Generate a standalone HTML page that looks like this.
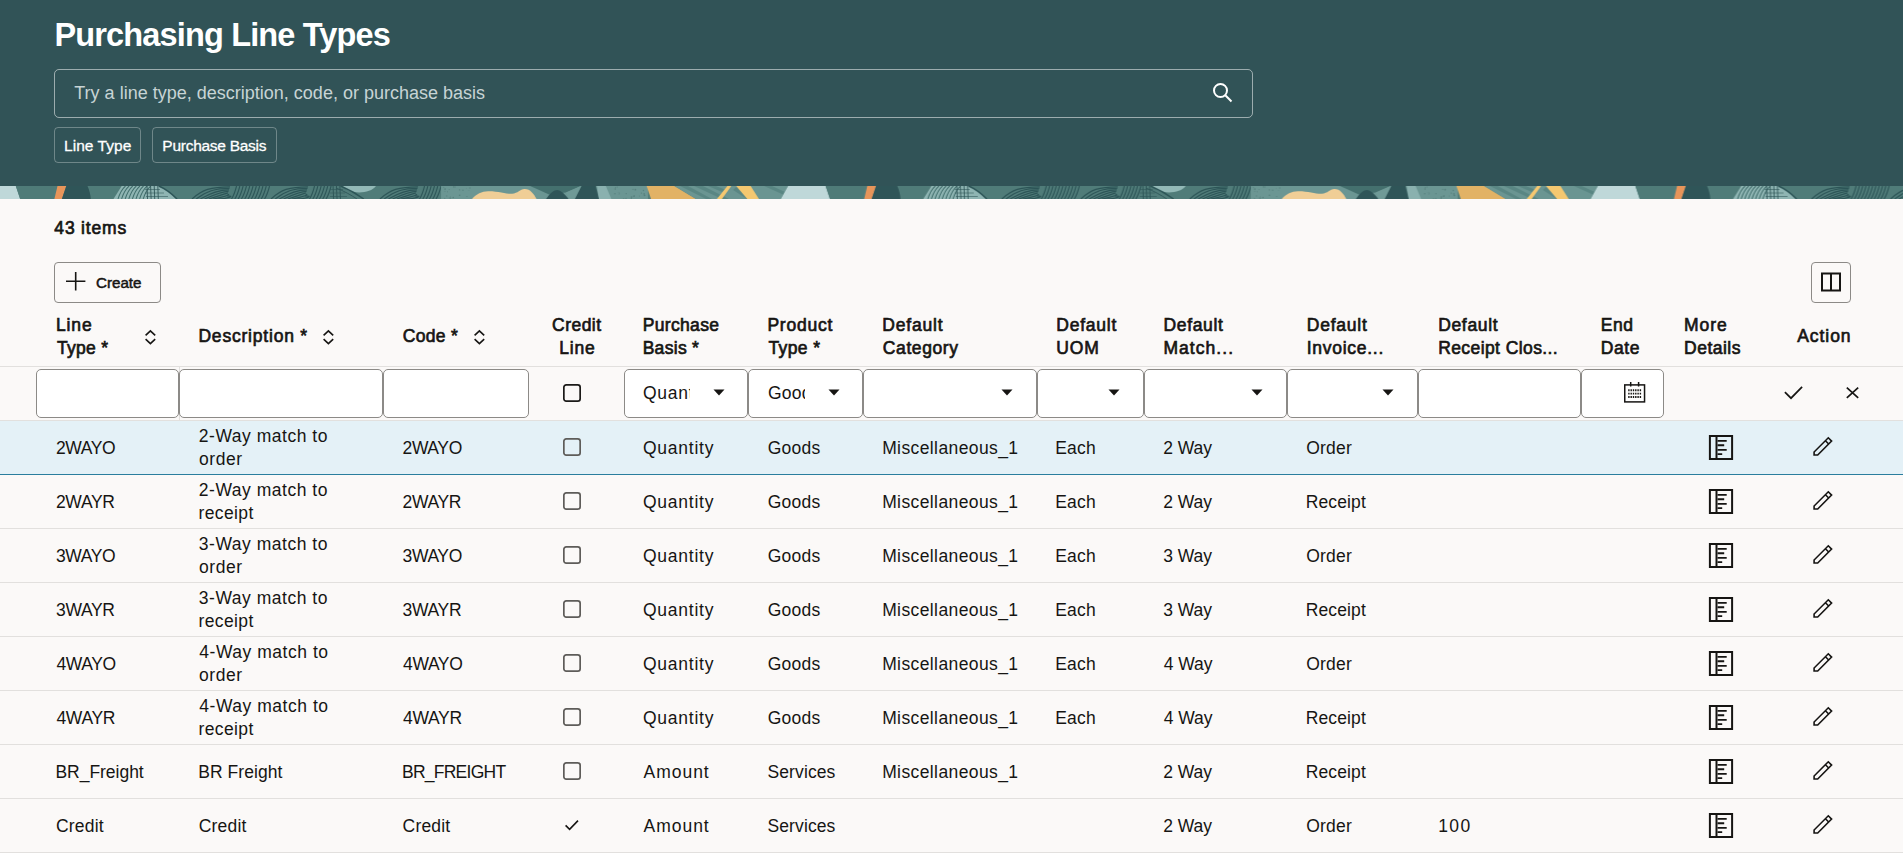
<!DOCTYPE html>
<html lang="en">
<head>
<meta charset="utf-8">
<title>Purchasing Line Types</title>
<style>
*{box-sizing:border-box;margin:0;padding:0}
html,body{width:1903px;height:853px;overflow:hidden;background:#fbf9f8}
body{font-family:"Liberation Sans",sans-serif;color:#161513;font-size:17px;position:relative}
#hdr{position:absolute;left:0;top:0;width:1903px;height:186px;background:#315357}
#search{position:absolute;left:54px;top:69px;width:1199px;height:49px;border:1px solid rgba(255,255,255,.52);border-radius:5px}
.chip{position:absolute;top:127px;height:36px;border:1px solid rgba(255,255,255,.3);border-radius:4px}
#strip{position:absolute;left:0;top:186px;width:1903px;height:13px;display:block}
.btn{position:absolute;border:1px solid #8c8a87;border-radius:4px;background:#fbf9f8}
#create{left:54px;top:262px;width:107px;height:41px}
#colbtn{left:1811px;top:262px;width:40px;height:41px}
.t{position:absolute;white-space:nowrap;line-height:24px;height:24px}
.ttl{font-size:32.5px;font-weight:bold;color:#fff;line-height:40px;height:40px}
.ph{font-size:18px;color:#c7d4d5}
.chp{font-size:15.5px;color:#fff;-webkit-text-stroke:.28px #fff}
.cnt{font-size:17.5px;-webkit-text-stroke:.68px #161513}
.crt{font-size:15.2px;-webkit-text-stroke:.5px #161513}
.th{font-size:17.5px;-webkit-text-stroke:.66px #161513}
.td{font-size:17.5px}
.clip{overflow:hidden}
.hl{position:absolute;left:0;width:1903px;height:1px;background:#e2e0de}
.inp{position:absolute;top:369px;height:49px;background:#fff;border:1px solid #8c8a87;border-radius:5px}
.row{position:absolute;left:0;width:1903px;height:54px;border-bottom:1px solid #e2e0de}
.row.sel{background:#e4f1f7;border-bottom:1px solid #2a7e9e}
.cb{position:absolute;left:563px;width:18px;height:18px;border:2px solid #646260;border-radius:3px;background:transparent}
svg{position:absolute;overflow:visible}
</style>
</head>
<body>
<div id="hdr">
  <div id="search">
    <svg style="left:1155px;top:10.3px" width="24" height="24" viewBox="0 0 24 24" fill="none" stroke="#fff" stroke-width="2"><circle cx="10.5" cy="10.5" r="6.5"/><path d="M15.3 15.3 L21.5 21.5"/></svg>
  </div>
  <div class="chip" style="left:54px;width:87px"></div>
  <div class="chip" style="left:152px;width:125px"></div>
</div>
<svg id="strip" width="1903" height="13" viewBox="0 0 1903 13">
<defs><pattern id="pt" x="54" y="0" width="809.8" height="13" patternUnits="userSpaceOnUse"><g transform="translate(-54,0)">
<rect x="54" y="0" width="809.8" height="13" fill="#507c79"/>
<path d="M57.5 0 L66.3 0 L61.9 13 L54.4 13 Z" fill="#e8955a"/>
<path d="M66.3 0 L87.5 0 C89.5 4 90.5 9 90.8 13 L61.9 13 Z" fill="#2f5558"/>
<path d="M121.7 0 L158.7 0 C166 3 172 8 177 13 L113.5 13 Z" fill="#8fb5b3"/>
<path d="M118.0 13 C119.5 8 122.0 3 125.5 0" stroke="#3f6d6b" stroke-width="1" fill="none"/>
<path d="M121.6 13 C123.1 8 125.6 3 129.1 0" stroke="#3f6d6b" stroke-width="1" fill="none"/>
<path d="M125.2 13 C126.7 8 129.2 3 132.7 0" stroke="#3f6d6b" stroke-width="1" fill="none"/>
<path d="M128.8 13 C130.3 8 132.8 3 136.3 0" stroke="#3f6d6b" stroke-width="1" fill="none"/>
<path d="M132.4 13 C133.9 8 136.4 3 139.9 0" stroke="#3f6d6b" stroke-width="1" fill="none"/>
<path d="M136.0 13 C137.5 8 140.0 3 143.5 0" stroke="#3f6d6b" stroke-width="1" fill="none"/>
<path d="M139.6 13 C141.1 8 143.6 3 147.1 0" stroke="#3f6d6b" stroke-width="1" fill="none"/>
<path d="M143.2 13 C144.7 8 147.2 3 150.7 0" stroke="#3f6d6b" stroke-width="1" fill="none"/>
<path d="M147.0 0 L147.5 13" stroke="#2c5557" stroke-width="0.9" fill="none"/>
<path d="M150.6 0 L151.1 13" stroke="#2c5557" stroke-width="0.9" fill="none"/>
<path d="M154.2 0 L154.7 13" stroke="#2c5557" stroke-width="0.9" fill="none"/>
<path d="M157.8 0 L158.3 13" stroke="#2c5557" stroke-width="0.9" fill="none"/>
<path d="M145 3.5 L160 3.5 M145 7 L164 7 M146 10.5 L168 10.5" stroke="#2c5557" stroke-width="0.7" fill="none" opacity=".8"/>
<path d="M158.7 0 C166 3 172 8 177 13" stroke="#2c5557" stroke-width="1.6" fill="none"/>
<path d="M192.0 13 C202.2 3.8 210.7 0.8 230.0 0.8" stroke="#2c5557" stroke-width="1.25" fill="none"/>
<path d="M196.2 13 C206.4 5.3 214.9 2.3 229.5 2.3" stroke="#2c5557" stroke-width="1.25" fill="none"/>
<path d="M200.4 13 C210.6 6.8 219.1 3.8 229.0 3.8" stroke="#2c5557" stroke-width="1.25" fill="none"/>
<path d="M204.6 13 C214.8 8.3 223.3 5.3 228.5 5.3" stroke="#2c5557" stroke-width="1.25" fill="none"/>
<path d="M208.8 13 C219.0 9.8 227.5 6.8 228.0 6.8" stroke="#2c5557" stroke-width="1.25" fill="none"/>
<path d="M213.0 13 C223.2 11.3 231.7 8.3 227.5 8.3" stroke="#2c5557" stroke-width="1.25" fill="none"/>
<path d="M217.2 13 C227.4 12.8 235.9 9.8 227.0 9.8" stroke="#2c5557" stroke-width="1.25" fill="none"/>
<path d="M236.5 0 C235.5 4 234.0 9 231.5 13" stroke="#2c5557" stroke-width="1.15" fill="none"/>
<path d="M239.8 0 C238.8 4 237.3 9 234.8 13" stroke="#2c5557" stroke-width="1.15" fill="none"/>
<path d="M243.1 0 C242.1 4 240.6 9 238.1 13" stroke="#2c5557" stroke-width="1.15" fill="none"/>
<path d="M246.4 0 C245.4 4 243.9 9 241.4 13" stroke="#2c5557" stroke-width="1.15" fill="none"/>
<path d="M249.7 0 C248.7 4 247.2 9 244.7 13" stroke="#2c5557" stroke-width="1.15" fill="none"/>
<path d="M253.0 0 C252.0 4 250.5 9 248.0 13" stroke="#2c5557" stroke-width="1.15" fill="none"/>
<path d="M256.3 0 C255.3 4 253.8 9 251.3 13" stroke="#2c5557" stroke-width="1.15" fill="none"/>
<path d="M259.6 0 C258.6 4 257.1 9 254.6 13" stroke="#2c5557" stroke-width="1.15" fill="none"/>
<path d="M262.9 0 C261.9 4 260.4 9 257.9 13" stroke="#2c5557" stroke-width="1.15" fill="none"/>
<path d="M266.2 0 C265.2 4 263.7 9 261.2 13" stroke="#2c5557" stroke-width="1.15" fill="none"/>
<path d="M269.5 0 C268.5 4 267.0 9 264.5 13" stroke="#2c5557" stroke-width="1.15" fill="none"/>
<path d="M271.0 13 C280.9 3.8 289.1 0.8 308.0 0.8" stroke="#2c5557" stroke-width="1.25" fill="none"/>
<path d="M275.2 13 C285.1 5.3 293.3 2.3 307.5 2.3" stroke="#2c5557" stroke-width="1.25" fill="none"/>
<path d="M279.4 13 C289.3 6.8 297.5 3.8 307.0 3.8" stroke="#2c5557" stroke-width="1.25" fill="none"/>
<path d="M283.6 13 C293.5 8.3 301.8 5.3 306.5 5.3" stroke="#2c5557" stroke-width="1.25" fill="none"/>
<path d="M287.8 13 C297.7 9.8 305.9 6.8 306.0 6.8" stroke="#2c5557" stroke-width="1.25" fill="none"/>
<path d="M292.0 13 C301.9 11.3 310.1 8.3 305.5 8.3" stroke="#2c5557" stroke-width="1.25" fill="none"/>
<path d="M296.2 13 C306.1 12.8 314.3 9.8 305.0 9.8" stroke="#2c5557" stroke-width="1.25" fill="none"/>
<path d="M314.5 0 C313.5 4 312.0 9 309.5 13" stroke="#2c5557" stroke-width="1.15" fill="none"/>
<path d="M317.8 0 C316.8 4 315.3 9 312.8 13" stroke="#2c5557" stroke-width="1.15" fill="none"/>
<path d="M321.1 0 C320.1 4 318.6 9 316.1 13" stroke="#2c5557" stroke-width="1.15" fill="none"/>
<path d="M324.4 0 C323.4 4 321.9 9 319.4 13" stroke="#2c5557" stroke-width="1.15" fill="none"/>
<path d="M327.7 0 C326.7 4 325.2 9 322.7 13" stroke="#2c5557" stroke-width="1.15" fill="none"/>
<path d="M331.0 0 C330.0 4 328.5 9 326.0 13" stroke="#2c5557" stroke-width="1.15" fill="none"/>
<path d="M333.0 0 L333.6 13" stroke="#2c5557" stroke-width="1" fill="none"/>
<path d="M336.4 0 L337.0 13" stroke="#2c5557" stroke-width="1" fill="none"/>
<path d="M339.8 0 L340.4 13" stroke="#2c5557" stroke-width="1" fill="none"/>
<path d="M330 3.5 L343 3.5 M330 7 L345 7 M330 10.5 L347 10.5" stroke="#2c5557" stroke-width="0.7" fill="none" opacity=".8"/>
<path d="M380.0 13 C390.2 3.8 398.7 0.8 418.0 0.8" stroke="#2c5557" stroke-width="1.25" fill="none"/>
<path d="M384.2 13 C394.4 5.3 402.9 2.3 417.5 2.3" stroke="#2c5557" stroke-width="1.25" fill="none"/>
<path d="M388.4 13 C398.6 6.8 407.1 3.8 417.0 3.8" stroke="#2c5557" stroke-width="1.25" fill="none"/>
<path d="M392.6 13 C402.8 8.3 411.3 5.3 416.5 5.3" stroke="#2c5557" stroke-width="1.25" fill="none"/>
<path d="M396.8 13 C407.0 9.8 415.5 6.8 416.0 6.8" stroke="#2c5557" stroke-width="1.25" fill="none"/>
<path d="M401.0 13 C411.2 11.3 419.7 8.3 415.5 8.3" stroke="#2c5557" stroke-width="1.25" fill="none"/>
<path d="M405.2 13 C415.4 12.8 423.9 9.8 415.0 9.8" stroke="#2c5557" stroke-width="1.25" fill="none"/>
<path d="M424.5 0 C423.5 4 422.0 9 419.5 13" stroke="#2c5557" stroke-width="1.15" fill="none"/>
<path d="M427.8 0 C426.8 4 425.3 9 422.8 13" stroke="#2c5557" stroke-width="1.15" fill="none"/>
<path d="M431.1 0 C430.1 4 428.6 9 426.1 13" stroke="#2c5557" stroke-width="1.15" fill="none"/>
<path d="M434.4 0 C433.4 4 431.9 9 429.4 13" stroke="#2c5557" stroke-width="1.15" fill="none"/>
<path d="M437.7 0 C436.7 4 435.2 9 432.7 13" stroke="#2c5557" stroke-width="1.15" fill="none"/>
<path d="M441.0 0 C440.0 4 438.5 9 436.0 13" stroke="#2c5557" stroke-width="1.15" fill="none"/>
<path d="M342.8 0 C348 8.5 370 8.5 375.9 0 Z" fill="#93b9b7"/>
<path d="M340.6 0 C349 3.5 357 8 363.8 13" stroke="#2c5557" stroke-width="1.5" fill="none"/>
<path d="M336 2 C344 5 351 9 357 13" stroke="#2c5557" stroke-width="0.9" fill="none"/>
<rect x="441" y="0" width="207" height="13" fill="#6b9693"/>
<path d="M530 0 L581 0 L566 6.5 L549 8.6 L538 3.4 Z" fill="#44706e"/>
<path d="M472 13 C476 8 482 5.4 488 5.2 C498 5 506 8 512 7.7 C518 7.4 520 3.2 524.5 3 C530 2.8 534 8 536.5 13 Z" fill="#f0ce96"/>
<path d="M546 13 C550 7 554 4 557 4 C561 4 565 8.5 568.5 13 Z" fill="#2f5558"/>
<path d="M566 6.5 L581 0 L576 13 L569 13 Z" fill="#6f9a97"/>
<path d="M581.5 0 L595.8 0 L599 13 L574.9 13 Z" fill="#2f5558"/>
<path d="M597 0 L605.8 0 L611.3 13 L599 13 Z" fill="#8ab1af"/>
<circle cx="444.9" cy="5.3" r="0.5" fill="#547f7c"/>
<circle cx="453.2" cy="11.5" r="0.8" fill="#547f7c"/>
<circle cx="619.5" cy="6.9" r="0.5" fill="#547f7c"/>
<circle cx="445.0" cy="3.1" r="0.9" fill="#547f7c"/>
<circle cx="639.4" cy="10.1" r="0.5" fill="#547f7c"/>
<circle cx="459.6" cy="9.3" r="0.8" fill="#547f7c"/>
<circle cx="614.9" cy="7.8" r="0.7" fill="#547f7c"/>
<circle cx="618.0" cy="6.2" r="0.4" fill="#547f7c"/>
<circle cx="641.4" cy="7.1" r="0.6" fill="#547f7c"/>
<circle cx="631.5" cy="11.1" r="0.8" fill="#547f7c"/>
<circle cx="626.1" cy="7.7" r="0.6" fill="#547f7c"/>
<circle cx="450.5" cy="10.3" r="0.4" fill="#547f7c"/>
<circle cx="459.5" cy="3.9" r="0.7" fill="#547f7c"/>
<circle cx="623.7" cy="12.5" r="0.5" fill="#547f7c"/>
<circle cx="618.9" cy="8.1" r="0.5" fill="#547f7c"/>
<circle cx="462.9" cy="4.3" r="0.7" fill="#547f7c"/>
<circle cx="615.4" cy="1.2" r="0.5" fill="#547f7c"/>
<circle cx="632.9" cy="3.3" r="0.6" fill="#547f7c"/>
<circle cx="454.9" cy="1.0" r="0.7" fill="#547f7c"/>
<circle cx="644.5" cy="9.3" r="0.9" fill="#547f7c"/>
<circle cx="450.1" cy="12.1" r="0.8" fill="#547f7c"/>
<circle cx="644.1" cy="7.9" r="0.8" fill="#547f7c"/>
<circle cx="447.4" cy="5.8" r="0.5" fill="#547f7c"/>
<circle cx="468.9" cy="4.5" r="0.4" fill="#547f7c"/>
<circle cx="446.7" cy="9.9" r="0.6" fill="#547f7c"/>
<circle cx="444.7" cy="12.3" r="0.6" fill="#547f7c"/>
<circle cx="443.7" cy="1.2" r="0.5" fill="#547f7c"/>
<circle cx="617.1" cy="1.0" r="0.6" fill="#547f7c"/>
<circle cx="469.9" cy="2.0" r="0.7" fill="#547f7c"/>
<circle cx="625.9" cy="12.4" r="0.6" fill="#547f7c"/>
<circle cx="453.5" cy="0.9" r="0.6" fill="#547f7c"/>
<circle cx="466.9" cy="10.5" r="0.6" fill="#547f7c"/>
<circle cx="449.1" cy="3.4" r="0.5" fill="#547f7c"/>
<circle cx="466.4" cy="2.2" r="0.4" fill="#547f7c"/>
<circle cx="631.2" cy="12.4" r="0.6" fill="#547f7c"/>
<circle cx="634.2" cy="10.0" r="0.8" fill="#547f7c"/>
<circle cx="615.2" cy="3.0" r="0.8" fill="#547f7c"/>
<circle cx="643.4" cy="4.5" r="0.7" fill="#547f7c"/>
<circle cx="633.8" cy="10.3" r="0.7" fill="#547f7c"/>
<circle cx="635.3" cy="3.7" r="0.9" fill="#547f7c"/>
<path d="M646.6 0 L674.4 0 L696 13 L651 13 Z" fill="#e2b265"/>
<path d="M674.4 0 L788.1 0 L780.9 13 L696 13 Z" fill="#6a9592"/>
<path d="M680 0 L706 13 L712 13 L688 0Z M694 0 L722 13 L729 13 L703 0Z M708 0 L722 6 L726 4 L716 0Z M733 4 L747 13 L752 13 L736 1Z M764 0 L784 9 L785 6 L772 0Z" fill="#598683"/>
<path d="M727.4 0 L731.3 0 L721.9 13 L716.9 13 Z" fill="#f5c870"/>
<path d="M736.2 0 L750.6 0 L758.9 13 L747.3 13 Z" fill="#f5c870"/>
<path d="M788.1 0 L825.6 0 L830 13 L780.9 13 Z" fill="#bfd8d9"/>
<rect x="830" y="0" width="35" height="13" fill="#4f7b78"/>
<path d="M825.6 0 L830 13 L830 0Z" fill="#4f7b78"/>
</g></pattern></defs>
<rect x="0" y="0" width="1903" height="13" fill="url(#pt)"/>
</svg>
<div class="btn" id="create">
  <svg style="left:10.8px;top:8.9px" width="19.4" height="18.6" viewBox="0 0 19.4 18.6" stroke="#161513" stroke-width="1.6" fill="none"><path d="M9.7 0v18.6M0 9.3h19.4"/></svg>
</div>
<div class="btn" id="colbtn">
  <svg style="left:9px;top:9px" width="20" height="20" viewBox="0 0 20 20" stroke="#161513" stroke-width="2" fill="none"><rect x="1" y="1.5" width="18" height="17"/><path d="M10 1.5v17"/></svg>
</div>
<svg style="left:144.7px;top:330.1px" width="10.8" height="14.6" viewBox="0 0 10.8 14.6" fill="none" stroke="#161513" stroke-width="1.6"><path d="M0.6 5.4 L5.4 0.9 L10.2 5.4 M0.6 9.2 L5.4 13.7 L10.2 9.2"/></svg>
<svg style="left:323.1px;top:330.1px" width="10.8" height="14.6" viewBox="0 0 10.8 14.6" fill="none" stroke="#161513" stroke-width="1.6"><path d="M0.6 5.4 L5.4 0.9 L10.2 5.4 M0.6 9.2 L5.4 13.7 L10.2 9.2"/></svg>
<svg style="left:473.90000000000003px;top:330.1px" width="10.8" height="14.6" viewBox="0 0 10.8 14.6" fill="none" stroke="#161513" stroke-width="1.6"><path d="M0.6 5.4 L5.4 0.9 L10.2 5.4 M0.6 9.2 L5.4 13.7 L10.2 9.2"/></svg>
<div class="hl" style="top:366px"></div>
<div style="position:absolute;left:179px;top:367px;width:1px;height:53px;background:#e2e0de"></div>
<div class="inp" style="left:36px;width:143px"></div>
<div class="inp" style="left:179px;width:204px"></div>
<div class="inp" style="left:383px;width:146px"></div>
<div class="inp" style="left:624px;width:124px"><svg style="left:87.5px;top:19px" width="12" height="7" viewBox="0 0 12 7"><path d="M0.5 0.5 L11.5 0.5 L6 6.5 Z" fill="#161513"/></svg></div>
<div class="inp" style="left:748px;width:115px"><svg style="left:78.5px;top:19px" width="12" height="7" viewBox="0 0 12 7"><path d="M0.5 0.5 L11.5 0.5 L6 6.5 Z" fill="#161513"/></svg></div>
<div class="inp" style="left:863px;width:174px"><svg style="left:137px;top:19px" width="12" height="7" viewBox="0 0 12 7"><path d="M0.5 0.5 L11.5 0.5 L6 6.5 Z" fill="#161513"/></svg></div>
<div class="inp" style="left:1037px;width:107px"><svg style="left:70px;top:19px" width="12" height="7" viewBox="0 0 12 7"><path d="M0.5 0.5 L11.5 0.5 L6 6.5 Z" fill="#161513"/></svg></div>
<div class="inp" style="left:1144px;width:143px"><svg style="left:106.3px;top:19px" width="12" height="7" viewBox="0 0 12 7"><path d="M0.5 0.5 L11.5 0.5 L6 6.5 Z" fill="#161513"/></svg></div>
<div class="inp" style="left:1287px;width:131px"><svg style="left:94.2px;top:19px" width="12" height="7" viewBox="0 0 12 7"><path d="M0.5 0.5 L11.5 0.5 L6 6.5 Z" fill="#161513"/></svg></div>
<div class="inp" style="left:1418px;width:163px"></div>
<div class="inp" style="left:1581px;width:83px"><svg style="left:40.8px;top:11px" width="22" height="22" viewBox="0 0 22 22" fill="none" stroke="#161513"><rect x="1.75" y="3.9" width="19.8" height="17" stroke-width="1.5"/><path d="M7.7 1v4.5M15.6 1v4.5" stroke-width="1.5"/><path d="M5.2 9.2h13M5.2 12.6h13M5.2 16h13" stroke-width="1.9" stroke-dasharray="1.4 0.9"/></svg></div>
<svg style="left:563px;top:384px" width="18" height="18" viewBox="0 0 18 18" fill="none" stroke="#1b1a18" stroke-width="1.7"><rect x="0.85" y="0.85" width="16.3" height="16.3" rx="2.4"/></svg>
<svg style="left:1784px;top:386px" width="19" height="13.5" viewBox="0 0 19 13.5" fill="none" stroke="#161513" stroke-width="1.7"><path d="M0.9 6.2 L7 12.2 L18.1 0.8"/></svg>
<svg style="left:1845.5px;top:386.8px" width="13" height="11.4" viewBox="0 0 13 11.4" fill="none" stroke="#161513" stroke-width="1.7"><path d="M0.8 0.6 L12.2 10.8 M12.2 0.6 L0.8 10.8"/></svg>
<div class="hl" style="top:420px"></div>
<div class="row sel" style="top:421px"><svg style="left:563px;top:17px" width="18" height="18" viewBox="0 0 18 18" fill="none" stroke="#5e5c59" stroke-width="1.7"><rect x="0.85" y="0.85" width="16.3" height="16.3" rx="2.4"/></svg><svg style="left:1709px;top:14px" width="24" height="25" viewBox="0 0 24 25" fill="none" stroke="#161513" stroke-width="2"><rect x="0.9" y="1" width="22.2" height="23"/><path d="M7.5 1v23"/><path d="M8.5 5.9h9.2M8.5 10.2h6.7M8.5 14.9h9.2M8.5 19.1h4.7" stroke-width="1.9"/></svg><svg style="left:1812px;top:15px" width="22" height="22" viewBox="0 0 22 22" fill="none" stroke="#161513" stroke-width="1.6" stroke-linejoin="miter"><path d="M2.1 19 L2.1 16 L16.3 1.8 L19.6 5.1 L5.7 19 Z"/><path d="M13.4 4.7 L16.7 8"/></svg></div>
<div class="row" style="top:475px"><svg style="left:563px;top:17px" width="18" height="18" viewBox="0 0 18 18" fill="none" stroke="#5e5c59" stroke-width="1.7"><rect x="0.85" y="0.85" width="16.3" height="16.3" rx="2.4"/></svg><svg style="left:1709px;top:14px" width="24" height="25" viewBox="0 0 24 25" fill="none" stroke="#161513" stroke-width="2"><rect x="0.9" y="1" width="22.2" height="23"/><path d="M7.5 1v23"/><path d="M8.5 5.9h9.2M8.5 10.2h6.7M8.5 14.9h9.2M8.5 19.1h4.7" stroke-width="1.9"/></svg><svg style="left:1812px;top:15px" width="22" height="22" viewBox="0 0 22 22" fill="none" stroke="#161513" stroke-width="1.6" stroke-linejoin="miter"><path d="M2.1 19 L2.1 16 L16.3 1.8 L19.6 5.1 L5.7 19 Z"/><path d="M13.4 4.7 L16.7 8"/></svg></div>
<div class="row" style="top:529px"><svg style="left:563px;top:17px" width="18" height="18" viewBox="0 0 18 18" fill="none" stroke="#5e5c59" stroke-width="1.7"><rect x="0.85" y="0.85" width="16.3" height="16.3" rx="2.4"/></svg><svg style="left:1709px;top:14px" width="24" height="25" viewBox="0 0 24 25" fill="none" stroke="#161513" stroke-width="2"><rect x="0.9" y="1" width="22.2" height="23"/><path d="M7.5 1v23"/><path d="M8.5 5.9h9.2M8.5 10.2h6.7M8.5 14.9h9.2M8.5 19.1h4.7" stroke-width="1.9"/></svg><svg style="left:1812px;top:15px" width="22" height="22" viewBox="0 0 22 22" fill="none" stroke="#161513" stroke-width="1.6" stroke-linejoin="miter"><path d="M2.1 19 L2.1 16 L16.3 1.8 L19.6 5.1 L5.7 19 Z"/><path d="M13.4 4.7 L16.7 8"/></svg></div>
<div class="row" style="top:583px"><svg style="left:563px;top:17px" width="18" height="18" viewBox="0 0 18 18" fill="none" stroke="#5e5c59" stroke-width="1.7"><rect x="0.85" y="0.85" width="16.3" height="16.3" rx="2.4"/></svg><svg style="left:1709px;top:14px" width="24" height="25" viewBox="0 0 24 25" fill="none" stroke="#161513" stroke-width="2"><rect x="0.9" y="1" width="22.2" height="23"/><path d="M7.5 1v23"/><path d="M8.5 5.9h9.2M8.5 10.2h6.7M8.5 14.9h9.2M8.5 19.1h4.7" stroke-width="1.9"/></svg><svg style="left:1812px;top:15px" width="22" height="22" viewBox="0 0 22 22" fill="none" stroke="#161513" stroke-width="1.6" stroke-linejoin="miter"><path d="M2.1 19 L2.1 16 L16.3 1.8 L19.6 5.1 L5.7 19 Z"/><path d="M13.4 4.7 L16.7 8"/></svg></div>
<div class="row" style="top:637px"><svg style="left:563px;top:17px" width="18" height="18" viewBox="0 0 18 18" fill="none" stroke="#5e5c59" stroke-width="1.7"><rect x="0.85" y="0.85" width="16.3" height="16.3" rx="2.4"/></svg><svg style="left:1709px;top:14px" width="24" height="25" viewBox="0 0 24 25" fill="none" stroke="#161513" stroke-width="2"><rect x="0.9" y="1" width="22.2" height="23"/><path d="M7.5 1v23"/><path d="M8.5 5.9h9.2M8.5 10.2h6.7M8.5 14.9h9.2M8.5 19.1h4.7" stroke-width="1.9"/></svg><svg style="left:1812px;top:15px" width="22" height="22" viewBox="0 0 22 22" fill="none" stroke="#161513" stroke-width="1.6" stroke-linejoin="miter"><path d="M2.1 19 L2.1 16 L16.3 1.8 L19.6 5.1 L5.7 19 Z"/><path d="M13.4 4.7 L16.7 8"/></svg></div>
<div class="row" style="top:691px"><svg style="left:563px;top:17px" width="18" height="18" viewBox="0 0 18 18" fill="none" stroke="#5e5c59" stroke-width="1.7"><rect x="0.85" y="0.85" width="16.3" height="16.3" rx="2.4"/></svg><svg style="left:1709px;top:14px" width="24" height="25" viewBox="0 0 24 25" fill="none" stroke="#161513" stroke-width="2"><rect x="0.9" y="1" width="22.2" height="23"/><path d="M7.5 1v23"/><path d="M8.5 5.9h9.2M8.5 10.2h6.7M8.5 14.9h9.2M8.5 19.1h4.7" stroke-width="1.9"/></svg><svg style="left:1812px;top:15px" width="22" height="22" viewBox="0 0 22 22" fill="none" stroke="#161513" stroke-width="1.6" stroke-linejoin="miter"><path d="M2.1 19 L2.1 16 L16.3 1.8 L19.6 5.1 L5.7 19 Z"/><path d="M13.4 4.7 L16.7 8"/></svg></div>
<div class="row" style="top:745px"><svg style="left:563px;top:17px" width="18" height="18" viewBox="0 0 18 18" fill="none" stroke="#5e5c59" stroke-width="1.7"><rect x="0.85" y="0.85" width="16.3" height="16.3" rx="2.4"/></svg><svg style="left:1709px;top:14px" width="24" height="25" viewBox="0 0 24 25" fill="none" stroke="#161513" stroke-width="2"><rect x="0.9" y="1" width="22.2" height="23"/><path d="M7.5 1v23"/><path d="M8.5 5.9h9.2M8.5 10.2h6.7M8.5 14.9h9.2M8.5 19.1h4.7" stroke-width="1.9"/></svg><svg style="left:1812px;top:15px" width="22" height="22" viewBox="0 0 22 22" fill="none" stroke="#161513" stroke-width="1.6" stroke-linejoin="miter"><path d="M2.1 19 L2.1 16 L16.3 1.8 L19.6 5.1 L5.7 19 Z"/><path d="M13.4 4.7 L16.7 8"/></svg></div>
<div class="row" style="top:799px"><svg style="left:564.9px;top:21.3px" width="13.6" height="10.6" viewBox="0 0 13.6 10.6" fill="none" stroke="#161513" stroke-width="1.6"><path d="M0.6 5.4 L4.6 9.4 L13 0.6"/></svg><svg style="left:1709px;top:14px" width="24" height="25" viewBox="0 0 24 25" fill="none" stroke="#161513" stroke-width="2"><rect x="0.9" y="1" width="22.2" height="23"/><path d="M7.5 1v23"/><path d="M8.5 5.9h9.2M8.5 10.2h6.7M8.5 14.9h9.2M8.5 19.1h4.7" stroke-width="1.9"/></svg><svg style="left:1812px;top:15px" width="22" height="22" viewBox="0 0 22 22" fill="none" stroke="#161513" stroke-width="1.6" stroke-linejoin="miter"><path d="M2.1 19 L2.1 16 L16.3 1.8 L19.6 5.1 L5.7 19 Z"/><path d="M13.4 4.7 L16.7 8"/></svg></div>
<div class="t ttl" style="left:54.43px;top:15px;letter-spacing:-0.844px">Purchasing Line Types</div>
<div class="t ph" style="left:74.27px;top:81px;letter-spacing:0.005px">Try a line type, description, code, or purchase basis</div>
<div class="t chp" style="left:64.05px;top:134px;letter-spacing:0.035px">Line Type</div>
<div class="t chp" style="left:162.35px;top:134px;letter-spacing:-0.270px">Purchase Basis</div>
<div class="t cnt" style="left:54.35px;top:216px;letter-spacing:0.813px">43 items</div>
<div class="t crt" style="left:96.03px;top:271px;letter-spacing:-0.018px">Create</div>
<div class="t th" style="left:55.95px;top:313px;letter-spacing:0.872px">Line</div>
<div class="t th" style="left:56.95px;top:336px;letter-spacing:0.301px">Type *</div>
<div class="t th" style="left:198.45px;top:324px;letter-spacing:0.792px">Description *</div>
<div class="t th" style="left:402.80px;top:324px;letter-spacing:0.291px">Code *</div>
<div class="t th" style="left:552.10px;top:313px;letter-spacing:0.450px">Credit</div>
<div class="t th" style="left:559.15px;top:336px;letter-spacing:0.872px">Line</div>
<div class="t th" style="left:642.65px;top:313px;letter-spacing:0.345px">Purchase</div>
<div class="t th" style="left:642.65px;top:336px;letter-spacing:0.301px">Basis *</div>
<div class="t th" style="left:767.45px;top:313px;letter-spacing:0.757px">Product</div>
<div class="t th" style="left:768.45px;top:336px;letter-spacing:0.401px">Type *</div>
<div class="t th" style="left:882.25px;top:313px;letter-spacing:0.824px">Default</div>
<div class="t th" style="left:882.80px;top:336px;letter-spacing:0.604px">Category</div>
<div class="t th" style="left:1056.25px;top:313px;letter-spacing:0.757px">Default</div>
<div class="t th" style="left:1056.25px;top:336px;letter-spacing:0.900px">UOM</div>
<div class="t th" style="left:1163.45px;top:313px;letter-spacing:0.674px">Default</div>
<div class="t th" style="left:1163.45px;top:336px;letter-spacing:1.051px">Match...</div>
<div class="t th" style="left:1306.75px;top:313px;letter-spacing:0.757px">Default</div>
<div class="t th" style="left:1306.66px;top:336px;letter-spacing:0.732px">Invoice...</div>
<div class="t th" style="left:1438.15px;top:313px;letter-spacing:0.674px">Default</div>
<div class="t th" style="left:1438.15px;top:336px;letter-spacing:0.414px">Receipt Clos...</div>
<div class="t th" style="left:1600.85px;top:313px;letter-spacing:0.453px">End</div>
<div class="t th" style="left:1600.85px;top:336px;letter-spacing:0.538px">Date</div>
<div class="t th" style="left:1684.05px;top:313px;letter-spacing:0.905px">More</div>
<div class="t th" style="left:1684.05px;top:336px;letter-spacing:0.493px">Details</div>
<div class="t th" style="left:1797.15px;top:324px;letter-spacing:0.959px">Action</div>
<div class="t td" style="left:55.97px;top:436px;letter-spacing:-0.395px">2WAYO</div>
<div class="t td" style="left:198.77px;top:424px;letter-spacing:0.526px">2-Way match to</div>
<div class="t td" style="left:198.88px;top:447px;letter-spacing:0.597px">order</div>
<div class="t td" style="left:402.57px;top:436px;letter-spacing:-0.395px">2WAYO</div>
<div class="t td" style="left:642.91px;top:436px;letter-spacing:0.767px">Quantity</div>
<div class="t td" style="left:767.67px;top:436px;letter-spacing:0.270px">Goods</div>
<div class="t td" style="left:882.13px;top:436px;letter-spacing:0.402px">Miscellaneous_1</div>
<div class="t td" style="left:1055.23px;top:436px;letter-spacing:0.172px">Each</div>
<div class="t td" style="left:1163.17px;top:436px;letter-spacing:-0.031px">2 Way</div>
<div class="t td" style="left:1306.21px;top:436px;letter-spacing:0.239px">Order</div>
<div class="t td" style="left:55.97px;top:490px;letter-spacing:-0.335px">2WAYR</div>
<div class="t td" style="left:198.77px;top:478px;letter-spacing:0.526px">2-Way match to</div>
<div class="t td" style="left:198.52px;top:501px;letter-spacing:0.368px">receipt</div>
<div class="t td" style="left:402.57px;top:490px;letter-spacing:-0.335px">2WAYR</div>
<div class="t td" style="left:642.91px;top:490px;letter-spacing:0.767px">Quantity</div>
<div class="t td" style="left:767.67px;top:490px;letter-spacing:0.270px">Goods</div>
<div class="t td" style="left:882.13px;top:490px;letter-spacing:0.402px">Miscellaneous_1</div>
<div class="t td" style="left:1055.23px;top:490px;letter-spacing:0.172px">Each</div>
<div class="t td" style="left:1163.17px;top:490px;letter-spacing:-0.031px">2 Way</div>
<div class="t td" style="left:1305.63px;top:490px;letter-spacing:0.139px">Receipt</div>
<div class="t td" style="left:56.01px;top:544px;letter-spacing:-0.404px">3WAYO</div>
<div class="t td" style="left:198.81px;top:532px;letter-spacing:0.524px">3-Way match to</div>
<div class="t td" style="left:198.88px;top:555px;letter-spacing:0.597px">order</div>
<div class="t td" style="left:402.61px;top:544px;letter-spacing:-0.404px">3WAYO</div>
<div class="t td" style="left:642.91px;top:544px;letter-spacing:0.767px">Quantity</div>
<div class="t td" style="left:767.67px;top:544px;letter-spacing:0.270px">Goods</div>
<div class="t td" style="left:882.13px;top:544px;letter-spacing:0.402px">Miscellaneous_1</div>
<div class="t td" style="left:1055.23px;top:544px;letter-spacing:0.172px">Each</div>
<div class="t td" style="left:1163.21px;top:544px;letter-spacing:-0.040px">3 Way</div>
<div class="t td" style="left:1306.21px;top:544px;letter-spacing:0.239px">Order</div>
<div class="t td" style="left:56.01px;top:598px;letter-spacing:-0.344px">3WAYR</div>
<div class="t td" style="left:198.81px;top:586px;letter-spacing:0.524px">3-Way match to</div>
<div class="t td" style="left:198.52px;top:609px;letter-spacing:0.368px">receipt</div>
<div class="t td" style="left:402.61px;top:598px;letter-spacing:-0.344px">3WAYR</div>
<div class="t td" style="left:642.91px;top:598px;letter-spacing:0.767px">Quantity</div>
<div class="t td" style="left:767.67px;top:598px;letter-spacing:0.270px">Goods</div>
<div class="t td" style="left:882.13px;top:598px;letter-spacing:0.402px">Miscellaneous_1</div>
<div class="t td" style="left:1055.23px;top:598px;letter-spacing:0.172px">Each</div>
<div class="t td" style="left:1163.21px;top:598px;letter-spacing:-0.040px">3 Way</div>
<div class="t td" style="left:1305.63px;top:598px;letter-spacing:0.139px">Receipt</div>
<div class="t td" style="left:56.47px;top:652px;letter-spacing:-0.393px">4WAYO</div>
<div class="t td" style="left:199.27px;top:640px;letter-spacing:0.527px">4-Way match to</div>
<div class="t td" style="left:198.88px;top:663px;letter-spacing:0.597px">order</div>
<div class="t td" style="left:403.07px;top:652px;letter-spacing:-0.393px">4WAYO</div>
<div class="t td" style="left:642.91px;top:652px;letter-spacing:0.767px">Quantity</div>
<div class="t td" style="left:767.67px;top:652px;letter-spacing:0.270px">Goods</div>
<div class="t td" style="left:882.13px;top:652px;letter-spacing:0.402px">Miscellaneous_1</div>
<div class="t td" style="left:1055.23px;top:652px;letter-spacing:0.172px">Each</div>
<div class="t td" style="left:1163.67px;top:652px;letter-spacing:-0.030px">4 Way</div>
<div class="t td" style="left:1306.21px;top:652px;letter-spacing:0.239px">Order</div>
<div class="t td" style="left:56.47px;top:706px;letter-spacing:-0.333px">4WAYR</div>
<div class="t td" style="left:199.27px;top:694px;letter-spacing:0.527px">4-Way match to</div>
<div class="t td" style="left:198.52px;top:717px;letter-spacing:0.368px">receipt</div>
<div class="t td" style="left:403.07px;top:706px;letter-spacing:-0.333px">4WAYR</div>
<div class="t td" style="left:642.91px;top:706px;letter-spacing:0.767px">Quantity</div>
<div class="t td" style="left:767.67px;top:706px;letter-spacing:0.270px">Goods</div>
<div class="t td" style="left:882.13px;top:706px;letter-spacing:0.402px">Miscellaneous_1</div>
<div class="t td" style="left:1055.23px;top:706px;letter-spacing:0.172px">Each</div>
<div class="t td" style="left:1163.67px;top:706px;letter-spacing:-0.030px">4 Way</div>
<div class="t td" style="left:1305.63px;top:706px;letter-spacing:0.139px">Receipt</div>
<div class="t td" style="left:55.43px;top:760px;letter-spacing:-0.022px">BR_Freight</div>
<div class="t td" style="left:198.23px;top:760px;letter-spacing:0.056px">BR Freight</div>
<div class="t td" style="left:402.03px;top:760px;letter-spacing:-0.753px">BR_FREIGHT</div>
<div class="t td" style="left:643.58px;top:760px;letter-spacing:0.958px">Amount</div>
<div class="t td" style="left:767.45px;top:760px;letter-spacing:0.118px">Services</div>
<div class="t td" style="left:882.13px;top:760px;letter-spacing:0.402px">Miscellaneous_1</div>
<div class="t td" style="left:1163.17px;top:760px;letter-spacing:-0.031px">2 Way</div>
<div class="t td" style="left:1305.63px;top:760px;letter-spacing:0.139px">Receipt</div>
<div class="t td" style="left:55.95px;top:814px;letter-spacing:0.197px">Credit</div>
<div class="t td" style="left:198.75px;top:814px;letter-spacing:0.197px">Credit</div>
<div class="t td" style="left:402.55px;top:814px;letter-spacing:0.197px">Credit</div>
<div class="t td" style="left:643.58px;top:814px;letter-spacing:0.958px">Amount</div>
<div class="t td" style="left:767.45px;top:814px;letter-spacing:0.118px">Services</div>
<div class="t td" style="left:1163.17px;top:814px;letter-spacing:-0.031px">2 Way</div>
<div class="t td" style="left:1306.21px;top:814px;letter-spacing:0.239px">Order</div>
<div class="t td" style="left:1438.15px;top:814px;letter-spacing:1.402px">100</div>
<div class="t td" style="left:642.91px;top:381px;letter-spacing:0.767px;width:47.09px;overflow:hidden">Quantity</div>
<div class="t td" style="left:767.97px;top:381px;letter-spacing:0.270px;width:37.03px;overflow:hidden">Goods</div>
</body>
</html>
